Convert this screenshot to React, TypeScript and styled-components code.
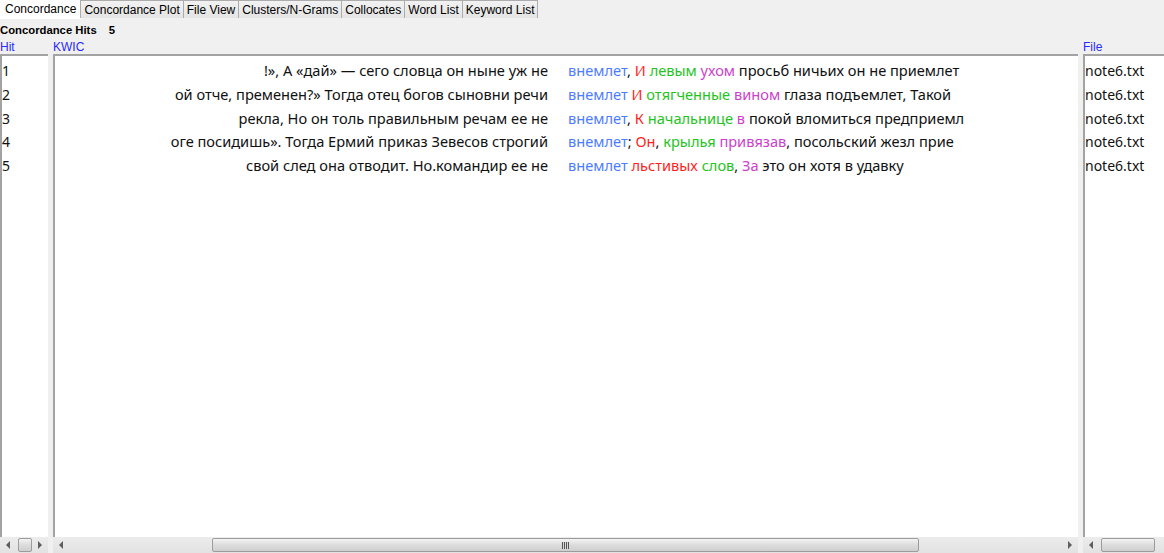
import React from "react";
import styled, { createGlobalStyle } from "styled-components";

const Global = createGlobalStyle`
  html, body { margin: 0; padding: 0; background: #f0f0f0; }
  body { font-family: "Liberation Sans", Arial, sans-serif; }
`;

const Page = styled.div`
  width: 1164px;
  height: 553px;
  overflow: hidden;
  background: #f0f0f0;
  display: flex;
  flex-direction: column;
`;

const TabBar = styled.div`
  display: flex;
  height: 19px;
  align-items: flex-start;
`;

const Tab = styled.div<{ $active?: boolean }>`
  height: ${(p) => (p.$active ? "19px" : "18px")};
  box-sizing: border-box;
  padding: ${(p) => (p.$active ? "1px 4px 0 4px" : "2px 3px 0 3px")};
  font-size: 12px;
  line-height: 15px;
  color: #000;
  white-space: nowrap;
  background: ${(p) => (p.$active ? "#ffffff" : "linear-gradient(#f2f2f2, #e4e4e4)")};
  border: 1px solid ${(p) => (p.$active ? "transparent" : "#acacac")};
  border-bottom: none;
  margin-left: ${(p) => (p.$active ? "0" : "-1px")};
  &:first-child { margin-left: 0; }
`;

const HitsLine = styled.div`
  height: 20px;
  box-sizing: border-box;
  padding-top: 2px;
  display: flex;
  align-items: center;
  gap: 12px;
  font-size: 11.3px;
  font-weight: bold;
  color: #000;
`;

const Body = styled.div`
  flex: 1;
  display: flex;
  gap: 5px;
  min-height: 0;
`;

const Column = styled.div<{ $w: number }>`
  width: ${(p) => p.$w}px;
  flex: none;
  display: flex;
  flex-direction: column;
`;

const Header = styled.div`
  height: 15px;
  font-size: 12px;
  line-height: 17px;
  color: #2a2aff;
  flex: none;
`;

const Panel = styled.div`
  flex: 1;
  background: #ffffff;
  border-top: 2px solid #a3a3a3;
  border-left: 2px solid #a3a3a3;
  padding-top: 3px;
  overflow: hidden;
  font-family: "Noto Sans", "Open Sans", sans-serif;
  font-size: 14px;
  color: #111;
`;

const Row = styled.div`
  height: 23.75px;
  line-height: 23.75px;
  white-space: nowrap;
  overflow: hidden;
`;

const HitRow = styled(Row)`
  padding-left: 0;
`;

const FileRow = styled(Row)`
  padding-left: 0;
`;

const KwicRow = styled(Row)`
  display: grid;
  grid-template-columns: 493px 1fr;
  column-gap: 20px;
  font-size: 14.6px;
`;

const Left = styled.div`
  text-align: right;
  overflow: hidden;
  direction: rtl;
  white-space: nowrap;
`;

const LeftInner = styled.span`
  direction: ltr;
  unicode-bidi: embed;
`;

const Right = styled.div`
  overflow: hidden;
  white-space: nowrap;
`;

const colors: Record<string, string> = {
  k: "#4d7dff",
  r: "#ff1f1f",
  g: "#1fc41f",
  m: "#cc3fcc",
  n: "#111111",
};

const Word = styled.span<{ $c: string }>`
  color: ${(p) => colors[p.$c]};
`;

const Scroll = styled.div`
  height: 16px;
  flex: none;
  display: flex;
  background: linear-gradient(#ececec, #e2e2e2);
`;

const Arrow = styled.div<{ $dir: "l" | "r" }>`
  width: 16px;
  flex: none;
  display: flex;
  align-items: center;
  justify-content: center;
  &::before {
    content: "";
    width: 0;
    height: 0;
    border-top: 4px solid transparent;
    border-bottom: 4px solid transparent;
    ${(p) =>
      p.$dir === "l"
        ? "border-right: 4px solid #5f5f5f;"
        : "border-left: 4px solid #5f5f5f;"}
  }
`;

const Track = styled.div`
  flex: 1;
  display: flex;
  align-items: stretch;
  padding: 1px 0;
  overflow: hidden;
`;

const Thumb = styled.div<{ $grip?: boolean }>`
  flex: none;
  box-sizing: border-box;
  border: 1px solid #9c9c9c;
  border-radius: 2px;
  background: linear-gradient(#f4f4f4, #dcdcdc 50%, #cfcfcf);
  display: flex;
  align-items: center;
  justify-content: center;
  &::after {
    content: "";
    display: ${(p) => (p.$grip ? "block" : "none")};
    width: 7px;
    height: 7px;
    background: repeating-linear-gradient(90deg, #555 0 1px, #d8d8d8 1px 2px);
  }
`;

type Seg = [string, string];

const rows: { left: string; right: Seg[] }[] = [
  {
    left: "!», А «дай» — сего словца он ныне уж не",
    right: [
      ["k", "внемлет"],
      ["n", ", "],
      ["r", "И"],
      ["n", " "],
      ["g", "левым"],
      ["n", " "],
      ["m", "ухом"],
      ["n", " просьб ничьих он не приемлет"],
    ],
  },
  {
    left: "ой отче, пременен?» Тогда отец богов сыновни речи",
    right: [
      ["k", "внемлет"],
      ["n", " "],
      ["r", "И"],
      ["n", " "],
      ["g", "отягченные"],
      ["n", " "],
      ["m", "вином"],
      ["n", " глаза подъемлет, Такой"],
    ],
  },
  {
    left: "рекла, Но он толь правильным речам ее не",
    right: [
      ["k", "внемлет"],
      ["n", ", "],
      ["r", "К"],
      ["n", " "],
      ["g", "начальнице"],
      ["n", " "],
      ["m", "в"],
      ["n", " покой вломиться предприемл"],
    ],
  },
  {
    left: "оге посидишь». Тогда Ермий приказ Зевесов строгий",
    right: [
      ["k", "внемлет"],
      ["n", "; "],
      ["r", "Он"],
      ["n", ", "],
      ["g", "крылья"],
      ["n", " "],
      ["m", "привязав"],
      ["n", ", посольский жезл прие"],
    ],
  },
  {
    left: "свой след она отводит. Но.командир ее не",
    right: [
      ["k", "внемлет"],
      ["n", " "],
      ["r", "льстивых"],
      ["n", " "],
      ["g", "слов"],
      ["n", ", "],
      ["m", "За"],
      ["n", " это он хотя в удавку"],
    ],
  },
];

const tabs = [
  "Concordance",
  "Concordance Plot",
  "File View",
  "Clusters/N-Grams",
  "Collocates",
  "Word List",
  "Keyword List",
];

function ScrollBar({ start, size, grip }: { start: number; size: number; grip?: boolean }) {
  return (
    <Scroll>
      <Arrow $dir="l" />
      <Track>
        <Thumb $grip={grip} style={{ marginLeft: start, width: size }} />
      </Track>
      <Arrow $dir="r" />
    </Scroll>
  );
}

export default function App() {
  return (
    <Page>
      <Global />
      <TabBar>
        {tabs.map((t, i) => (
          <Tab key={t} $active={i === 0}>
            {t}
          </Tab>
        ))}
      </TabBar>
      <HitsLine>
        <span>Concordance Hits</span>
        <span>5</span>
      </HitsLine>
      <Body>
        <Column $w={48}>
          <Header>Hit</Header>
          <Panel>
            {rows.map((_, i) => (
              <HitRow key={i}>{i + 1}</HitRow>
            ))}
          </Panel>
          <ScrollBar start={2} size={14} />
        </Column>
        <Column $w={1025}>
          <Header>KWIC</Header>
          <Panel>
            {rows.map((r, i) => (
              <KwicRow key={i}>
                <Left>
                  <LeftInner>{r.left}</LeftInner>
                </Left>
                <Right>
                  {r.right.map(([c, t], j) => (
                    <Word key={j} $c={c}>
                      {t}
                    </Word>
                  ))}
                </Right>
              </KwicRow>
            ))}
          </Panel>
          <ScrollBar start={143} size={707} grip />
        </Column>
        <Column $w={95}>
          <Header>File</Header>
          <Panel>
            {rows.map((_, i) => (
              <FileRow key={i}>note6.txt</FileRow>
            ))}
          </Panel>
          <ScrollBar start={2} size={54} />
        </Column>
      </Body>
    </Page>
  );
}
